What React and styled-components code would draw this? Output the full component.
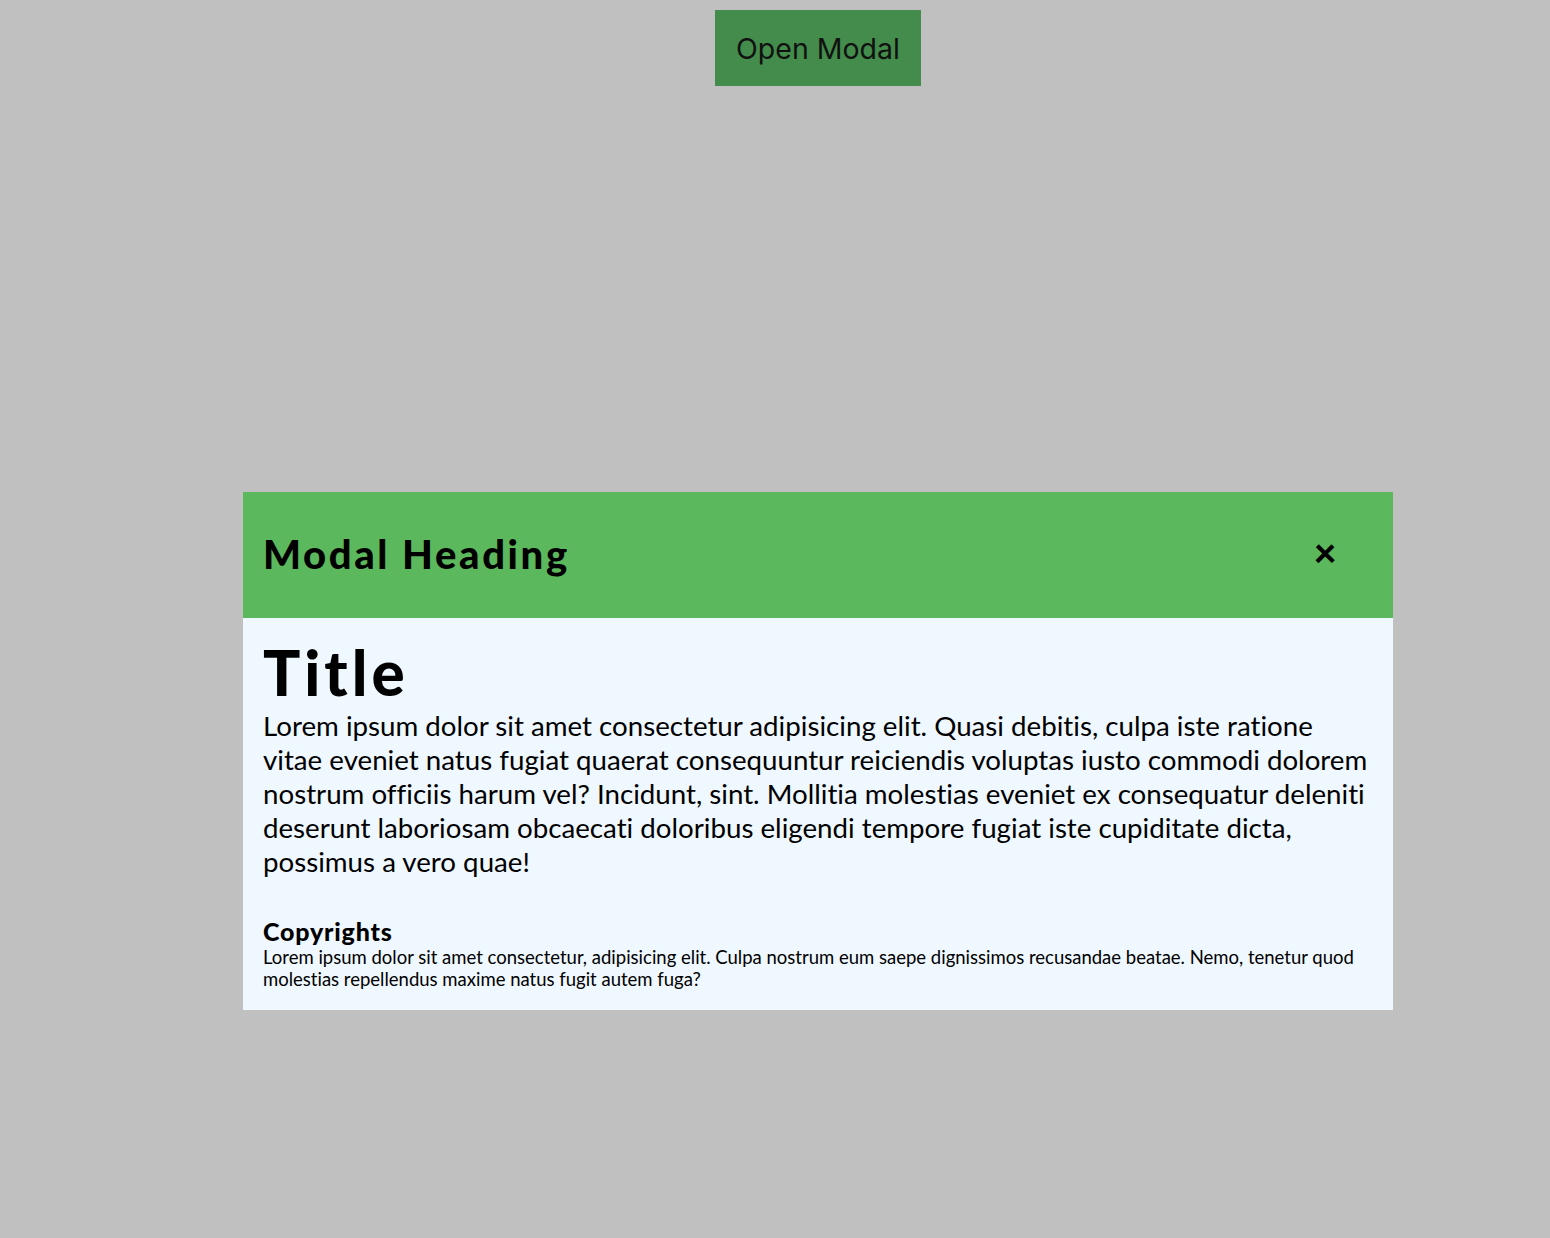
import React from "react";
import styled, { createGlobalStyle } from "styled-components";

const Global = createGlobalStyle`
  html, body { margin: 0; padding: 0; background: #c0c0c0; }
  body {
    font-family: "Lato", "Open Sans", sans-serif;
    color: #000;
    font-variant-ligatures: none;
  }
  * { box-sizing: border-box; }
`;

const Page = styled.div`
  min-height: 1238px;
  display: flex;
  flex-direction: column;
  align-items: center;
  padding: 10px 0 0 86px;
`;

const OpenButton = styled.button`
  width: 206px;
  height: 76px;
  background: #438c4b;
  border: none;
  padding: 0;
  font-family: "Inter", "Noto Sans", sans-serif;
  font-size: 28.5px;
  color: #111;
  cursor: pointer;
`;

const Modal = styled.div`
  width: 1150px;
  margin-top: 406px;
  background: #eff7ff;
  display: flex;
  flex-direction: column;
`;

const Header = styled.div`
  height: 126px;
  background: #5cb85c;
  display: flex;
  align-items: center;
  justify-content: space-between;
  padding: 0 56px 0 20px;
`;

const Heading = styled.h2`
  margin: 0;
  font-size: 40px;
  font-weight: 900;
  letter-spacing: 2.6px;
  padding-bottom: 2px;
`;

const Close = styled.span`
  font-size: 40px;
  font-weight: 900;
  line-height: 1;
  width: 24px;
  display: flex;
  justify-content: center;
  padding-bottom: 6px;
`;

const Body = styled.div`
  padding: 22px 20px 20px;
`;

const Title = styled.h1`
  margin: 0 0 5px;
  font-size: 62px;
  line-height: 64px;
  font-weight: 900;
  letter-spacing: 4px;
`;

const Text = styled.p`
  margin: 0;
  font-size: ${(p) => p.size}px;
  line-height: ${(p) => p.lh}px;
`;

const Footer = styled.div`
  margin-top: 39px;
`;

const FooterTitle = styled.h4`
  margin: 0 0 2px;
  font-size: 25px;
  line-height: 26px;
  font-weight: 900;
  letter-spacing: 0.8px;
`;

export default function App() {
  return (
    <>
      <Global />
      <Page>
        <OpenButton>Open Modal</OpenButton>
        <Modal>
          <Header>
            <Heading>Modal Heading</Heading>
            <Close>×</Close>
          </Header>
          <Body>
            <Title>Title</Title>
            <Text size={27.7} lh={34}>
              Lorem ipsum dolor sit amet consectetur adipisicing elit. Quasi debitis, culpa iste ratione vitae eveniet
              natus fugiat quaerat consequuntur reiciendis voluptas iusto commodi dolorem nostrum officiis harum vel?
              Incidunt, sint. Mollitia molestias eveniet ex consequatur deleniti deserunt laboriosam obcaecati
              doloribus eligendi tempore fugiat iste cupiditate dicta, possimus a vero quae!
            </Text>
            <Footer>
              <FooterTitle>Copyrights</FooterTitle>
              <Text size={18.5} lh={22}>
                Lorem ipsum dolor sit amet consectetur, adipisicing elit. Culpa nostrum eum saepe dignissimos
                recusandae beatae. Nemo, tenetur quod molestias repellendus maxime natus fugit autem fuga?
              </Text>
            </Footer>
          </Body>
        </Modal>
      </Page>
    </>
  );
}
